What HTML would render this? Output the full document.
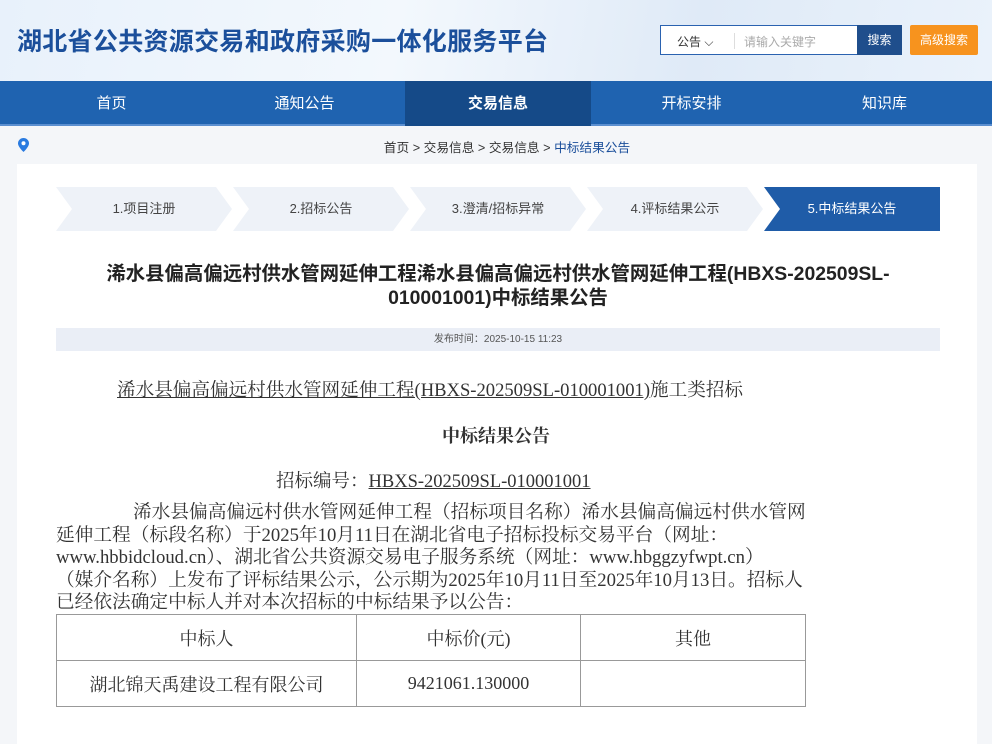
<!DOCTYPE html>
<html><head><meta charset="utf-8"><style>
*{margin:0;padding:0;box-sizing:border-box}
body{width:992px;height:739px;overflow:hidden;background:#f4f6f9;font-family:"Liberation Sans","Noto Sans CJK SC",sans-serif;position:relative}
.hdr{position:absolute;left:0;top:0;width:992px;height:81px;background:linear-gradient(100deg,#e8f1fb 0%,#f3f8fd 40%,#dfeaf7 70%,#eaf2fb 100%)}
.title{position:absolute;left:17px;top:22px;font-size:25px;font-weight:bold;color:#1b4f9b;letter-spacing:0.3px}
.sbox{position:absolute;left:660px;top:25px;width:198px;height:30px;border:1px solid #2a62b0;background:#fff;border-right:none}
.sbox .a{position:absolute;left:16px;top:7px;font-size:12px;color:#333}
.sbox .sep{position:absolute;left:73px;top:7px;width:1px;height:16px;background:#ddd}
.sbox .p{position:absolute;left:83px;top:7px;font-size:12px;color:#aaa}
.btn1{position:absolute;left:857px;top:25px;width:45px;height:30px;background:#1f4e8c;color:#fff;font-size:12px;text-align:center;line-height:30px}
.btn2{position:absolute;left:910px;top:25px;width:68px;height:30px;background:#f7931e;color:#fff;font-size:12px;text-align:center;line-height:30px;border-radius:2px}
.nav{position:absolute;left:0;top:81px;width:992px;height:45px;background:#1f63b0;border-bottom:2px solid #5b8fd0}
.nav div{position:absolute;top:0;height:45px;line-height:45px;text-align:center;color:#fff;font-size:15px;width:193px}
.nav .on{background:#154a88;font-weight:bold}
.crumb{position:absolute;left:0;top:137px;width:1014px;text-align:center;font-size:12.7px;color:#333}
.crumb span{color:#1b4f9b}
.pin{position:absolute;left:18px;top:138px}
.card{position:absolute;left:17px;top:164px;width:960px;height:580px;background:#fff}
.steps{position:absolute;left:56px;top:187px}
.step{position:absolute;top:0;height:44px;width:176px;line-height:44px;text-align:center;font-size:13px;color:#444;background:#eef2f8;clip-path:polygon(0 0,160px 0,176px 22px,160px 44px,0 44px,16px 22px)}
.step.on{background:#1f5ca8;color:#fff;clip-path:polygon(0 0,176px 0,176px 44px,0 44px,16px 22px)}
.h1{position:absolute;left:40px;width:916px;top:262px;text-align:center;font-size:19.4px;font-weight:bold;color:#222;line-height:24px}
.date{position:absolute;left:56px;top:328px;width:884px;height:23px;background:#eaeef6;text-align:center;line-height:23px;font-size:10px;color:#555}
.serif{font-family:"Liberation Serif","Noto Serif CJK SC",serif;color:#333;white-space:nowrap;position:absolute}
u{text-decoration:underline}
table{position:absolute;left:56px;top:614px;width:750px;border-collapse:collapse;font-family:"Liberation Serif","Noto Serif CJK SC",serif;font-size:18px;color:#333}
td{border:1px solid #999;height:46px;text-align:center}
</style></head><body>
<div class="hdr"></div>
<div class="title">湖北省公共资源交易和政府采购一体化服务平台</div>
<div class="sbox"><span class="a">公告 ⌵</span><span class="sep"></span><span class="p">请输入关键字</span></div>
<div class="btn1">搜索</div><div class="btn2">高级搜索</div>
<div class="nav">
<div style="left:15px">首页</div><div style="left:208px">通知公告</div><div class="on" style="left:405px;width:186px">交易信息</div><div style="left:595px">开标安排</div><div style="left:788px">知识库</div>
</div>
<svg class="pin" width="11" height="14" viewBox="0 0 11 14"><path d="M5.5 0C2.5 0 0 2.4 0 5.4 0 9 5.5 14 5.5 14S11 9 11 5.4C11 2.4 8.5 0 5.5 0z" fill="#2a7be0"/><circle cx="5.5" cy="5.3" r="2" fill="#fff"/></svg>
<div class="crumb">首页 &gt; 交易信息 &gt; 交易信息 &gt; <span>中标结果公告</span></div>
<div class="card"></div>
<div class="steps">
<div class="step" style="left:0">1.项目注册</div>
<div class="step" style="left:177px">2.招标公告</div>
<div class="step" style="left:354px">3.澄清/招标异常</div>
<div class="step" style="left:531px">4.评标结果公示</div>
<div class="step on" style="left:708px">5.中标结果公告</div>
</div>
<div class="h1">浠水县偏高偏远村供水管网延伸工程浠水县偏高偏远村供水管网延伸工程(HBXS-202509SL-<br>010001001)中标结果公告</div>
<div class="date">发布时间：2025-10-15 11:23</div>
<div class="serif" style="left:117px;top:376px;font-size:18.6px"><u>浠水县偏高偏远村供水管网延伸工程(HBXS-202509SL-010001001)</u>施工类招标</div>
<div class="serif" style="left:0;width:992px;text-align:center;top:422px;font-size:18px;font-weight:bold">中标结果公告</div>
<div class="serif" style="left:276px;top:467px;font-size:18.5px">招标编号：<u>HBXS-202509SL-010001001</u></div>
<div class="serif" style="left:56px;top:502px;font-size:18.7px;line-height:22.6px">
<span style="padding-left:77px"></span>浠水县偏高偏远村供水管网延伸工程（招标项目名称）浠水县偏高偏远村供水管网<br>延伸工程（标段名称）于2025年10月11日在湖北省电子招标投标交易平台（网址：<br>www.hbbidcloud.cn）、湖北省公共资源交易电子服务系统（网址：www.hbggzyfwpt.cn）<br>（媒介名称）上发布了评标结果公示，公示期为2025年10月11日至2025年10月13日。招标人<br>已经依法确定中标人并对本次招标的中标结果予以公告：</div>
<table><tr><td style="width:300px">中标人</td><td style="width:224px">中标价(元)</td><td>其他</td></tr>
<tr><td>湖北锦天禹建设工程有限公司</td><td>9421061.130000</td><td></td></tr></table>
</body></html>
